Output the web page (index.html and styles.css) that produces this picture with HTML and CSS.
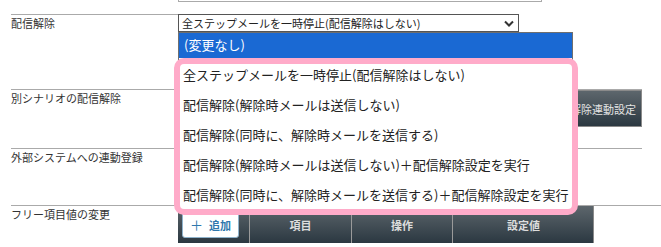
FILE: index.html
```html
<!DOCTYPE html>
<html lang="ja">
<head>
    <meta charset="UTF-8">
    <meta name="viewport" content="width=device-width, initial-scale=1.0">
    <title>一括設定</title>
    <link rel="stylesheet" href="styles.css">
</head>
<body>
    <div class="page">
        <div class="prev-field"></div>

        <div class="form-row row-first">
            <div class="row-label">配信解除</div>
            <div class="row-body">
                <div class="select-wrap">
                    <div class="select-box">
                        <span>全ステップメールを一時停止(配信解除はしない)</span>
                        <svg class="chevron" width="10" height="7" viewBox="0 0 10 7">
                            <polyline points="1,1.5 5,5.5 9,1.5" fill="none" stroke="#333" stroke-width="2"/>
                        </svg>
                    </div>
                    <div class="dropdown">
                        <div class="opt opt-active">(変更なし)</div>
                        <div class="opt-list">
                            <div class="opt">全ステップメールを一時停止(配信解除はしない)</div>
                            <div class="opt">配信解除(解除時メールは送信しない)</div>
                            <div class="opt">配信解除(同時に、解除時メールを送信する)</div>
                            <div class="opt">配信解除(解除時メールは送信しない)＋配信解除設定を実行</div>
                            <div class="opt">配信解除(同時に、解除時メールを送信する)＋配信解除設定を実行</div>
                        </div>
                        <div class="highlight"></div>
                    </div>
                </div>
            </div>
        </div>

        <div class="form-row row-second">
            <div class="row-label">別シナリオの配信解除</div>
            <div class="row-body row-body-end">
                <button type="button" class="dark-btn">配信解除連動設定</button>
            </div>
        </div>

        <div class="form-row row-third">
            <div class="row-label">外部システムへの連動登録</div>
            <div class="row-body"></div>
        </div>

        <div class="form-row row-last">
            <div class="row-label">フリー項目値の変更</div>
            <div class="row-body">
                <div class="field-table">
                    <div class="th th-add">
                        <button type="button" class="add-btn"><span class="plus">＋</span>追加</button>
                    </div>
                    <div class="th">項目</div>
                    <div class="th">操作</div>
                    <div class="th">設定値</div>
                </div>
            </div>
        </div>
    </div>
</body>
</html>
```

FILE: styles.css
```css
:root {
    --line-color: #aaaaaa;
    --text-color: #333333;
    --select-blue: #1a69d3;
    --mark-pink: #ffabc9;
    --dark-top: #5d666c;
    --dark-bottom: #2b3841;
}

* {
    margin: 0;
    padding: 0;
    box-sizing: border-box;
}

body {
    font-family: "Noto Sans CJK JP", "Noto Sans", sans-serif;
    color: var(--text-color);
    background-color: #ffffff;
    font-size: 11px;
    line-height: 16px;
}

.page {
    width: 642px;
    padding-left: 11px;
}

.prev-field {
    margin-left: 167px;
    width: 364px;
    height: 2px;
    border: 1px solid var(--line-color);
    border-top: none;
    margin-bottom: 12px;
}

.form-row {
    display: grid;
    grid-template-columns: 167px 1fr;
    border-top: 1px solid var(--line-color);
}

.row-first {
    border-top: none;
    height: 75px;
}

.row-first .row-label {
    border-top: 1px solid var(--line-color);
    padding-top: 0;
}

.row-second {
    height: 59px;
}

.row-third {
    height: 57px;
}

.row-last {
    width: 650px;
    height: 38px;
}

.row-label {
    color: var(--text-color);
}

.row-body {
    position: relative;
}

.row-body-end {
    display: flex;
    justify-content: flex-end;
    align-items: flex-start;
}

/* セレクトボックス（展開中） */
.select-wrap {
    position: relative;
    width: 341px;
    z-index: 2;
}

.select-box {
    height: 18px;
    border: 1px solid #555555;
    display: flex;
    align-items: center;
    justify-content: space-between;
    padding: 0 4px 0 3px;
    font-size: 11px;
    color: #222222;
    background-color: #ffffff;
}

.chevron {
    display: block;
}

.dropdown {
    position: absolute;
    left: 0;
    top: 18px;
    width: 395px;
    height: 182px;
    background-color: #ffffff;
    border: 1px solid #6f6f6f;
    font-size: 13px;
    color: #222222;
}

.opt {
    height: 30px;
    line-height: 30px;
    padding-left: 4px;
    white-space: nowrap;
}

.opt-active {
    height: 25px;
    line-height: 24px;
    padding-left: 5px;
    background-color: var(--select-blue);
    color: #ffffff;
}

.opt-list {
    padding-top: 2px;
}

.highlight {
    position: absolute;
    left: -5px;
    top: 25px;
    width: 404px;
    height: 157px;
    border: 6px solid var(--mark-pink);
    border-radius: 10px;
    pointer-events: none;
}

/* 暗色ボタン・テーブル見出し */
.dark-btn {
    height: 37px;
    padding: 0 5px 0 6px;
    border: 1px solid #8a8a8a;
    background: linear-gradient(to bottom, var(--dark-top), var(--dark-bottom));
    color: #e4e4e4;
    font-family: inherit;
    font-size: 11px;
    cursor: pointer;
}

.field-table {
    display: grid;
    grid-template-columns: 71px 102px 101px 142px;
    width: 416px;
    height: 37px;
    background: linear-gradient(to bottom, var(--dark-top), var(--dark-bottom));
    border-right: 1px solid #8a8a8a;
}

.th {
    display: flex;
    align-items: center;
    justify-content: center;
    color: #dddddd;
    font-weight: bold;
    font-size: 11px;
    border-left: 1px solid #9a9a9a;
}

.th-add {
    border-left: none;
    justify-content: flex-start;
    padding-left: 4px;
}

.add-btn {
    width: 57px;
    height: 27px;
    border: 1px solid #8fb3cc;
    border-radius: 3px;
    background-color: #ffffff;
    color: #2f78ad;
    font-family: inherit;
    font-size: 11px;
    font-weight: bold;
    display: flex;
    align-items: center;
    justify-content: center;
    cursor: pointer;
}

.plus {
    font-weight: normal;
    font-size: 13px;
    margin-right: 6px;
}
```
